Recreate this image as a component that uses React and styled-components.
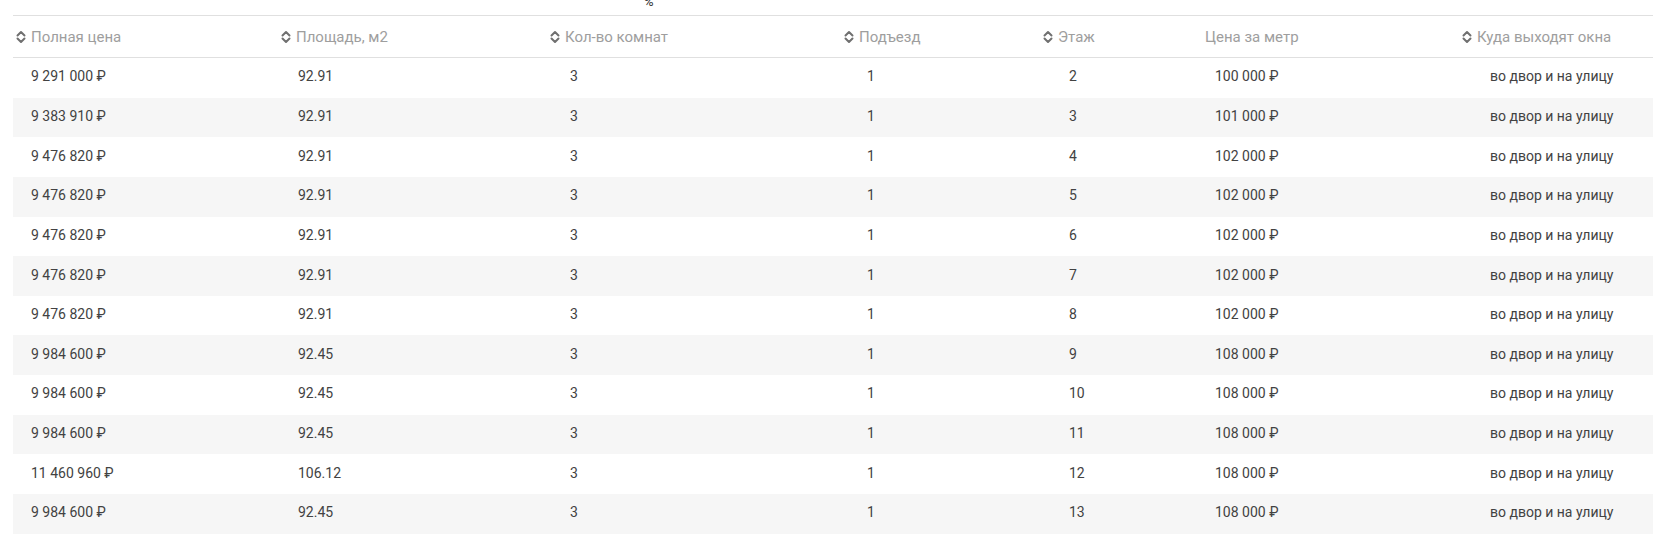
import React from "react";
import styled, { createGlobalStyle } from "styled-components";

const Global = createGlobalStyle`
  html, body { margin: 0; padding: 0; background: #fff; }
  body { font-family: Roboto, "Noto Sans", sans-serif; }
`;

const Page = styled.div`
  padding-left: 13px;
  overflow: hidden;
`;

const TopStrip = styled.div`
  height: 15px;
  overflow: hidden;
  display: flex;
  align-items: flex-end;
  padding-left: 631px;
`;

const CutLabel = styled.span`
  display: block;
  font-size: 13px;
  line-height: 13px;
  margin-bottom: 7px;
  color: #333;
`;

const COLS = "268px 269px 294px 199px 162px 257px 191px";

const Table = styled.div`
  width: 1640px;
`;

const HeadRow = styled.div`
  display: grid;
  grid-template-columns: ${COLS};
  height: 41px;
  border-top: 1px solid #e0e0e0;
  border-bottom: 1px solid #e0e0e0;
`;

const HeadCell = styled.div`
  display: flex;
  align-items: center;
  gap: 5px;
  padding-left: ${(p) => p.$pad}px;
  font-size: 15px;
  color: #9e9e9e;
  white-space: nowrap;
`;

const SortIcon = styled.svg`
  width: 10px;
  height: 14px;
  flex: none;
  color: #707070;
`;

const BodyRow = styled.div`
  display: grid;
  grid-template-columns: ${COLS};
  height: 39.65px;
  background: ${(p) => (p.$striped ? "#f6f6f6" : "#fff")};
`;

const Cell = styled.div`
  display: flex;
  align-items: center;
  padding-left: ${(p) => p.$pad}px;
  padding-bottom: 3px;
  font-size: 14px;
  color: #424242;
  white-space: nowrap;
`;

const columns = [
  { title: "Полная цена", sort: true, head: 3, body: 18 },
  { title: "Площадь, м2", sort: true, head: 0, body: 17 },
  { title: "Кол-во комнат", sort: true, head: 0, body: 20 },
  { title: "Подъезд", sort: true, head: 0, body: 23 },
  { title: "Этаж", sort: true, head: 0, body: 26 },
  { title: "Цена за метр", sort: false, head: 0, body: 10 },
  { title: "Куда выходят окна", sort: true, head: 0, body: 28 },
];

const raw = [
  ["9 291 000 ₽", "92.91", "2", "100 000 ₽"],
  ["9 383 910 ₽", "92.91", "3", "101 000 ₽"],
  ["9 476 820 ₽", "92.91", "4", "102 000 ₽"],
  ["9 476 820 ₽", "92.91", "5", "102 000 ₽"],
  ["9 476 820 ₽", "92.91", "6", "102 000 ₽"],
  ["9 476 820 ₽", "92.91", "7", "102 000 ₽"],
  ["9 476 820 ₽", "92.91", "8", "102 000 ₽"],
  ["9 984 600 ₽", "92.45", "9", "108 000 ₽"],
  ["9 984 600 ₽", "92.45", "10", "108 000 ₽"],
  ["9 984 600 ₽", "92.45", "11", "108 000 ₽"],
  ["11 460 960 ₽", "106.12", "12", "108 000 ₽"],
  ["9 984 600 ₽", "92.45", "13", "108 000 ₽"],
];

const rows = raw.map(([price, area, floor, ppm]) => [
  price,
  area,
  "3",
  "1",
  floor,
  ppm,
  "во двор и на улицу",
]);

const Sort = () => (
  <SortIcon viewBox="0 0 10 14" fill="none">
    <polyline
      points="1.5,5.5 5,2 8.5,5.5"
      stroke="currentColor"
      strokeWidth="2"
      strokeLinecap="round"
      strokeLinejoin="round"
    />
    <polyline
      points="1.5,8.5 5,12 8.5,8.5"
      stroke="currentColor"
      strokeWidth="2"
      strokeLinecap="round"
      strokeLinejoin="round"
    />
  </SortIcon>
);

export default function App() {
  return (
    <Page>
      <Global />
      <TopStrip>
        <CutLabel>%</CutLabel>
      </TopStrip>
      <Table>
        <HeadRow>
          {columns.map((c) => (
            <HeadCell key={c.title} $pad={c.head}>
              {c.sort && <Sort />}
              <span>{c.title}</span>
            </HeadCell>
          ))}
        </HeadRow>
        {rows.map((r, i) => (
          <BodyRow key={i} $striped={i % 2 === 1}>
            {r.map((v, j) => (
              <Cell key={j} $pad={columns[j].body}>
                {v}
              </Cell>
            ))}
          </BodyRow>
        ))}
      </Table>
    </Page>
  );
}
